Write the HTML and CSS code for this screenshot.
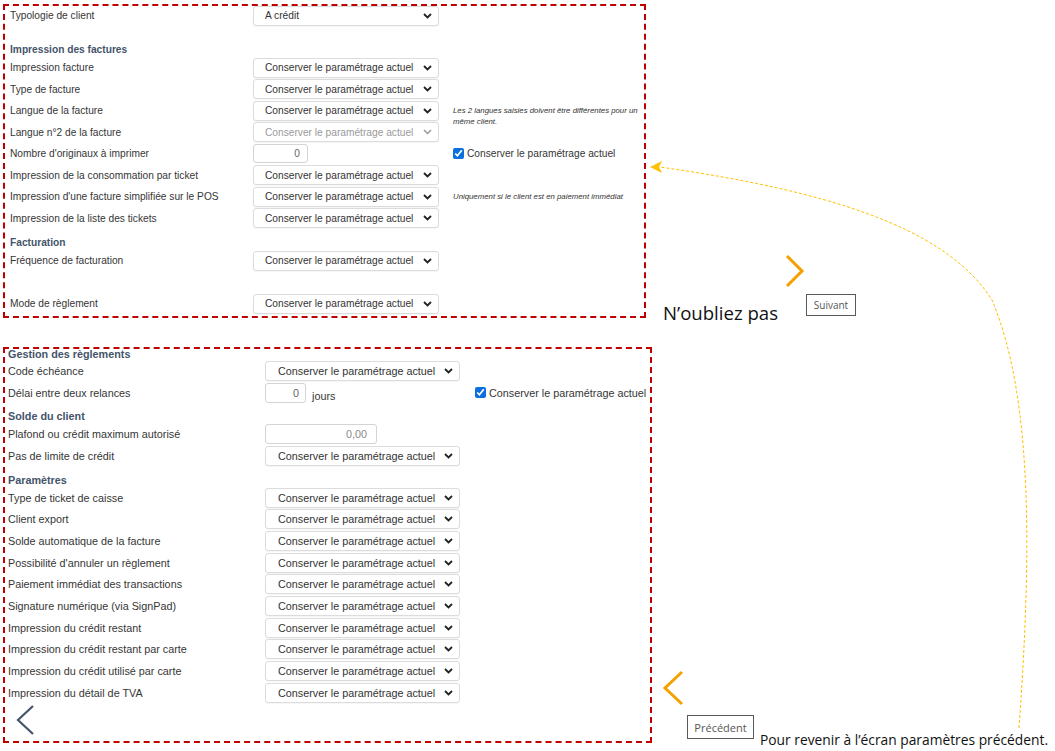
FILE: index.html
```html
<!DOCTYPE html>
<html>
  <head>
    <title>Paramètres client</title>
    <link rel="stylesheet" href="styles.css">
  </head>
  <body>
    <div class="page">
      <div class="box box-top">
        <div class="row lead">
          <label>Typologie de client</label>
          <select><option>A crédit</option></select>
        </div>

        <h4 class="section first">Impression des factures</h4>
        <div class="row">
          <label>Impression facture</label>
          <select><option>Conserver le paramétrage actuel</option></select>
        </div>
        <div class="row">
          <label>Type de facture</label>
          <select><option>Conserver le paramétrage actuel</option></select>
        </div>
        <div class="row">
          <label>Langue de la facture</label>
          <select><option>Conserver le paramétrage actuel</option></select>
          <span class="hint two-lines">Les 2 langues saisies doivent être différentes pour un même client.</span>
        </div>
        <div class="row">
          <label>Langue n°2 de la facture</label>
          <select disabled><option>Conserver le paramétrage actuel</option></select>
        </div>
        <div class="row">
          <label>Nombre d'originaux à imprimer</label>
          <div class="field"><input class="num" type="text" value="0"></div>
          <label class="keep"><input type="checkbox" checked> Conserver le paramétrage actuel</label>
        </div>
        <div class="row">
          <label>Impression de la consommation par ticket</label>
          <select><option>Conserver le paramétrage actuel</option></select>
        </div>
        <div class="row">
          <label>Impression d'une facture simplifiée sur le POS</label>
          <select><option>Conserver le paramétrage actuel</option></select>
          <span class="hint">Uniquement si le client est en paiement immédiat</span>
        </div>
        <div class="row">
          <label>Impression de la liste des tickets</label>
          <select><option>Conserver le paramétrage actuel</option></select>
        </div>

        <h4 class="section">Facturation</h4>
        <div class="row">
          <label>Fréquence de facturation</label>
          <select><option>Conserver le paramétrage actuel</option></select>
        </div>
        <div class="row"></div>
        <div class="row">
          <label>Mode de règlement</label>
          <select><option>Conserver le paramétrage actuel</option></select>
        </div>
      </div>

      <div class="box box-bottom">
        <h4 class="section first">Gestion des règlements</h4>
        <div class="row">
          <label>Code échéance</label>
          <select><option>Conserver le paramétrage actuel</option></select>
        </div>
        <div class="row">
          <label>Délai entre deux relances</label>
          <div class="field"><input class="num" type="text" value="0"> <span class="unit">jours</span></div>
          <label class="keep"><input type="checkbox" checked> Conserver le paramétrage actuel</label>
        </div>

        <h4 class="section">Solde du client</h4>
        <div class="row">
          <label>Plafond ou crédit maximum autorisé</label>
          <div class="field"><input class="num wide" type="text" value="0,00" disabled></div>
        </div>
        <div class="row">
          <label>Pas de limite de crédit</label>
          <select><option>Conserver le paramétrage actuel</option></select>
        </div>

        <h4 class="section">Paramètres</h4>
        <div class="row">
          <label>Type de ticket de caisse</label>
          <select><option>Conserver le paramétrage actuel</option></select>
        </div>
        <div class="row">
          <label>Client export</label>
          <select><option>Conserver le paramétrage actuel</option></select>
        </div>
        <div class="row">
          <label>Solde automatique de la facture</label>
          <select><option>Conserver le paramétrage actuel</option></select>
        </div>
        <div class="row">
          <label>Possibilité d'annuler un règlement</label>
          <select><option>Conserver le paramétrage actuel</option></select>
        </div>
        <div class="row">
          <label>Paiement immédiat des transactions</label>
          <select><option>Conserver le paramétrage actuel</option></select>
        </div>
        <div class="row">
          <label>Signature numérique (via SignPad)</label>
          <select><option>Conserver le paramétrage actuel</option></select>
        </div>
        <div class="row">
          <label>Impression du crédit restant</label>
          <select><option>Conserver le paramétrage actuel</option></select>
        </div>
        <div class="row">
          <label>Impression du crédit restant par carte</label>
          <select><option>Conserver le paramétrage actuel</option></select>
        </div>
        <div class="row">
          <label>Impression du crédit utilisé par carte</label>
          <select><option>Conserver le paramétrage actuel</option></select>
        </div>
        <div class="row">
          <label>Impression du détail de TVA</label>
          <select><option>Conserver le paramétrage actuel</option></select>
        </div>

        <svg class="back" width="24" height="34" viewBox="0 0 24 34">
          <path d="M17 1 L2 15 L17 29" fill="none" stroke="#44546a" stroke-width="2.2"/>
        </svg>
      </div>

      <!-- annotations drawn over the capture -->
      <svg class="overlay" width="1055" height="751" viewBox="0 0 1055 751">
        <path d="M1019 728 C1031 560, 1034 400, 992 300 C945 225, 820 190, 660 167" fill="none" stroke="#ffc000" stroke-width="1" stroke-dasharray="3 2"/>
        <path d="M650 167 L662 161 L659 167 L662 173 Z" fill="#ffc000"/>
        <path d="M787 256 L802 271 L787 286" fill="none" stroke="#f5a000" stroke-width="3"/>
        <path d="M682 672 L665 688 L682 704" fill="none" stroke="#f5a000" stroke-width="3"/>
      </svg>
      <span class="remember">N’oubliez pas</span>
      <span class="btn btn-next">Suivant</span>
      <span class="btn btn-prev">Précédent</span>
      <span class="caption">Pour revenir à l’écran paramètres précédent.</span>
    </div>
  </body>
</html>
```

FILE: styles.css
```css
body { margin: 0; background: #fff; font-family: "Liberation Sans", Arial, sans-serif; color: #363636; }

.page { position: relative; width: 1055px; height: 751px; padding: 4px 0 0 3px; box-sizing: border-box; }

.box { border: 2px dashed #c00000; box-sizing: border-box; }
.box-top { width: 643px; height: 314px; padding: 0 0 0 5px; font-size: 10.2px; }
.box-bottom { width: 649px; height: 396px; margin-top: 29px; padding: 0 0 0 3px; font-size: 10.8px; }

.row { display: grid; grid-template-rows: 100%; align-items: center; height: 21.5px; }
.row.lead { height: 19px; }
.box-top .row { grid-template-columns: 243px 186px auto; }
.box-bottom .row { grid-template-columns: 257px 195px auto; height: 21.7px; }
.row > label { white-space: nowrap; }

.section { margin: 0; font-size: inherit; font-weight: bold; color: #44546a; line-height: 14px; }
.box-top .section { padding-top: 7px; }
.box-top .section.first { padding-top: 18px; padding-bottom: 0; }
.box-bottom .section { padding-top: 6px; }
.box-bottom .section.first { padding-top: 0; line-height: 11px; }

select {
  -webkit-appearance: none; appearance: none;
  height: 20px; width: 100%; box-sizing: border-box;
  font: inherit; color: #333;
  border: 1px solid #dcdcdc; border-radius: 3px;
  padding: 0 0 0 11px; background: #fff;
  background-image: url("data:image/svg+xml;utf8,<svg xmlns='http://www.w3.org/2000/svg' width='9' height='6'><path d='M1 1 L4.5 4.5 L8 1' fill='none' stroke='%23222' stroke-width='1.8'/></svg>");
  background-repeat: no-repeat; background-position: right 6px center;
  box-shadow: 0 1px 1px rgba(0,0,0,0.04);
}
.box-bottom select { padding-left: 12px; }
select:disabled { color: #9a9a9a; opacity: 1; background-image: url("data:image/svg+xml;utf8,<svg xmlns='http://www.w3.org/2000/svg' width='9' height='6'><path d='M1 1 L4.5 4.5 L8 1' fill='none' stroke='%23999' stroke-width='1.5'/></svg>"); }

.field { display: flex; align-items: center; }
.num {
  font: inherit; color: #666; text-align: right;
  width: 55px; height: 19px; box-sizing: border-box;
  border: 1px solid #d4d4d4; border-radius: 3px; padding: 0 7px; background: #fff;
}
.box-bottom .num { width: 41px; height: 20px; padding-right: 6px; }
.box-bottom .num.wide { width: 112px; padding-right: 9px; color: #8a8a8a; }
.unit { margin-left: 6px; position: relative; top: 3px; }

.keep { display: flex; align-items: center; margin-left: 14px; white-space: nowrap; }
.box-bottom .keep { margin-left: 15px; }
.keep input { margin: 0 3px 0 0; width: 11px; height: 11px; accent-color: #0b6fe0; }

.hint { margin-left: 14px; font-size: 7.8px; font-style: italic; color: #333; line-height: 11px; white-space: nowrap; }
.hint.two-lines { align-self: start; margin-top: 5px; width: 186px; white-space: normal; }

.back { display: block; margin: 1px 0 0 8px; }

.overlay { position: absolute; left: 0; top: 0; pointer-events: none; }

.remember { position: absolute; left: 663px; top: 300px; font-family: "Open Sans", sans-serif; font-size: 18.6px; color: #111; }
.caption { position: absolute; left: 760px; top: 730px; font-family: "Open Sans", sans-serif; font-size: 13.8px; color: #111; }

.btn {
  position: absolute; box-sizing: border-box; border: 1px solid #5a5a5a;
  font-family: "Open Sans", sans-serif; font-size: 10px; color: #555;
  display: flex; align-items: center; justify-content: center;
}
.btn-next { left: 806px; top: 294px; width: 50px; height: 22px; }
.btn-prev { left: 687px; top: 715px; width: 67px; height: 24px; font-size: 11px; }
```
